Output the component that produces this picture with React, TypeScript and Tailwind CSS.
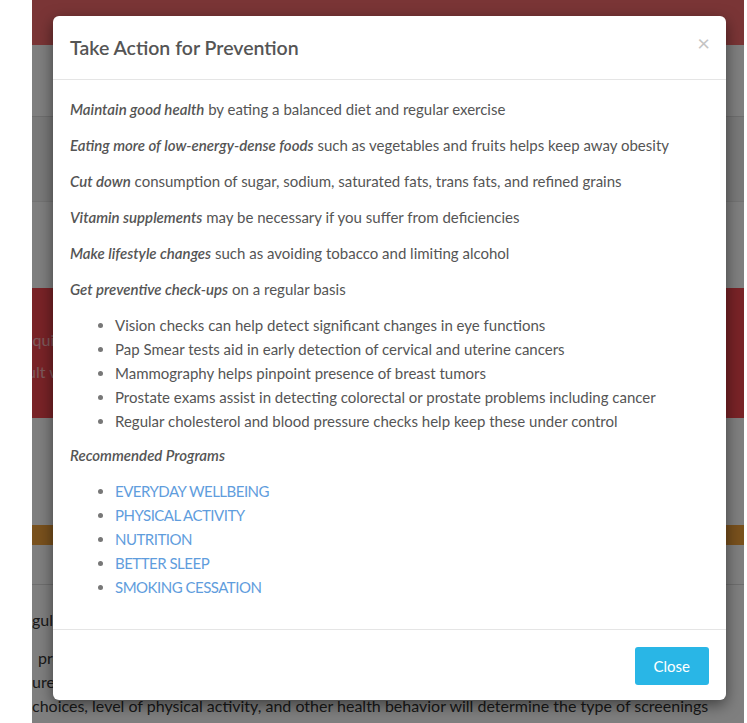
import React from 'react';

// Items for the check-up list
const checkups = [
  'Vision checks can help detect significant changes in eye functions',
  'Pap Smear tests aid in early detection of cervical and uterine cancers',
  'Mammography helps pinpoint presence of breast tumors',
  'Prostate exams assist in detecting colorectal or prostate problems including cancer',
  'Regular cholesterol and blood pressure checks help keep these under control',
];

const programs = ['EVERYDAY WELLBEING', 'PHYSICAL ACTIVITY', 'NUTRITION', 'BETTER SLEEP', 'SMOKING CESSATION'];

const tips: { bold: string; rest: string }[] = [
  { bold: 'Maintain good health', rest: ' by eating a balanced diet and regular exercise' },
  { bold: 'Eating more of low-energy-dense foods', rest: ' such as vegetables and fruits helps keep away obesity' },
  { bold: 'Cut down', rest: ' consumption of sugar, sodium, saturated fats, trans fats, and refined grains' },
  { bold: 'Vitamin supplements', rest: ' may be necessary if you suffer from deficiencies' },
  { bold: 'Make lifestyle changes', rest: ' such as avoiding tobacco and limiting alcohol' },
  { bold: 'Get preventive check-ups', rest: ' on a regular basis' },
];

// Page behind the modal
const PaginaFondo = () => (
  <div className="flex flex-col text-[16px] text-[#333]">
    <div className="h-[45px] bg-[#f46a6c]" />
    <div className="h-[72px] bg-white border-b border-[#dcdcdc]" />
    <div className="h-[85px] bg-[#f3f3f3] border-b border-[#e6e6e6]" />
    <div className="h-[86px] bg-white" />
    <div className="h-[130px] bg-[#f3474f] pt-[36px] text-white/60 leading-[32px] overflow-hidden">
      <p className="-ml-[12px] whitespace-nowrap">e quick assessment</p>
      <p className="-ml-[5px] whitespace-nowrap">ult with your doctor</p>
    </div>
    <div className="h-[107px] bg-white" />
    <div className="h-[20px] bg-[#f2a23a]" />
    <div className="h-[40px] bg-white border-b border-[#dcdcdc]" />
    <div className="bg-white pt-[23px] leading-[24px] overflow-hidden whitespace-nowrap">
      <p className="mb-[14px]">gular screenings</p>
      <p className="pl-[6px]">procedures</p>
      <p>ure</p>
      <p>choices, level of physical activity, and other health behavior will determine the type of screenings</p>
    </div>
  </div>
);

export default function App() {
  return (
    <div className="w-[747px] h-[723px] bg-white overflow-hidden" style={{ fontFamily: 'Lato, "Open Sans", sans-serif' }}>
      <div className="relative ml-[32px] w-[712px] h-[723px] overflow-hidden">
        <PaginaFondo />
        <div className="absolute inset-0 bg-black/50" />

        {/* Modal */}
        <div className="absolute left-[21px] top-[16px] w-[673px] bg-white rounded-[6px] shadow-[0_5px_15px_rgba(0,0,0,0.5)] text-[#555]">
          <div className="h-[64px] px-[17px] flex items-center justify-between border-b border-[#e5e5e5]">
            <h4 className="text-[19.5px] font-semibold text-[#555]">Take Action for Prevention</h4>
            <span className="text-[22px] leading-none text-[#c4c4c4] -mt-[10px] mr-[-1px]">×</span>
          </div>

          <div className="px-[17px] pt-[18px] pb-[19px] text-[15px] leading-[22px]">
            {tips.map((t) => (
              <p key={t.bold} className="mb-[14px]">
                <em className="font-semibold">{t.bold}</em>
                {t.rest}
              </p>
            ))}
            <ul className="list-disc pl-[45px] -mt-[1px] mb-[11px] leading-[24px] marker:text-[#777]">
              {checkups.map((c) => (
                <li key={c}>{c}</li>
              ))}
            </ul>
            <p className="mb-[13px]">
              <em className="font-semibold">Recommended Programs</em>
            </p>
            <ul className="list-disc pl-[45px] mb-[11px] leading-[24px] marker:text-[#777]">
              {programs.map((p) => (
                <li key={p}>
                  <a href="#" className="text-[#5f9ddd] tracking-[-0.5px]">{p}</a>
                </li>
              ))}
            </ul>
          </div>

          <div className="border-t border-[#e5e5e5] px-[17px] pt-[17px] pb-[15px] flex justify-end">
            <button className="h-[38px] px-[19px] bg-[#29b6e6] text-white text-[15px] rounded-[3px]">Close</button>
          </div>
        </div>
      </div>
    </div>
  );
}
